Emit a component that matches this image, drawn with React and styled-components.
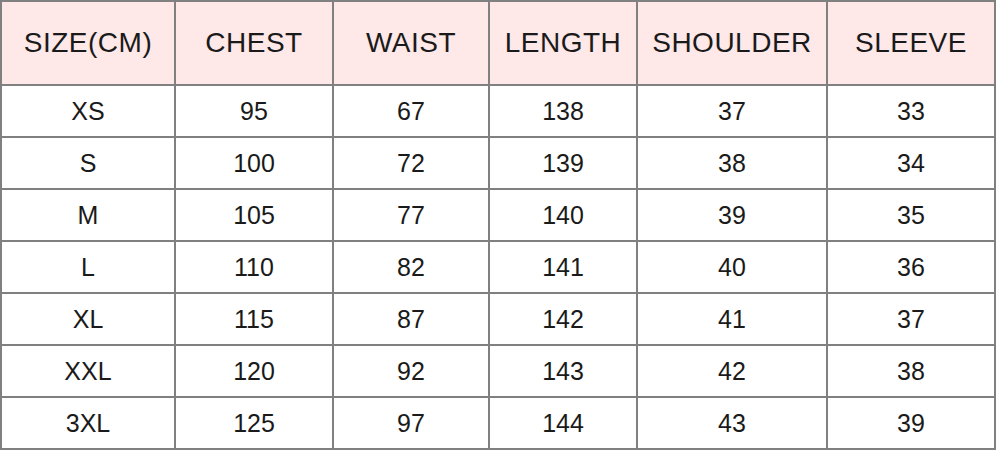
import React from "react";
import styled, { createGlobalStyle } from "styled-components";

const GlobalStyle = createGlobalStyle`
  body {
    margin: 0;
    background: #fff;
  }
`;

const Grid = styled.div`
  display: grid;
  grid-template-columns: 174px 158px 156px 148px 190px 168px;
  grid-template-rows: 84px repeat(7, 52px);
  width: 996px;
  border-left: 2px solid #808080;
  border-top: 2px solid #808080;
  box-sizing: border-box;
  font-family: "Liberation Sans", Arial, sans-serif;
  color: #1a1a1a;
`;

const Cell = styled.div`
  display: flex;
  align-items: center;
  justify-content: center;
  box-sizing: border-box;
  border-right: 2px solid #808080;
  border-bottom: 2px solid #808080;
  background: ${(p) => (p.$head ? "#ffe8e8" : "#fff")};
  font-size: ${(p) => (p.$head ? "28px" : "25px")};
  letter-spacing: ${(p) => (p.$head ? "0.5px" : "0")};
  white-space: nowrap;
`;

const heads = ["SIZE(CM)", "CHEST", "WAIST", "LENGTH", "SHOULDER", "SLEEVE"];

const rows = [
  ["XS", 95, 67, 138, 37, 33],
  ["S", 100, 72, 139, 38, 34],
  ["M", 105, 77, 140, 39, 35],
  ["L", 110, 82, 141, 40, 36],
  ["XL", 115, 87, 142, 41, 37],
  ["XXL", 120, 92, 143, 42, 38],
  ["3XL", 125, 97, 144, 43, 39],
];

export default function App() {
  return (
    <>
      <GlobalStyle />
      <Grid role="table">
        {heads.map((h) => (
          <Cell key={h} $head role="columnheader">
            {h}
          </Cell>
        ))}
        {rows.map((r) =>
          r.map((v, i) => (
            <Cell key={r[0] + i} role="cell">
              {v}
            </Cell>
          ))
        )}
      </Grid>
    </>
  );
}
